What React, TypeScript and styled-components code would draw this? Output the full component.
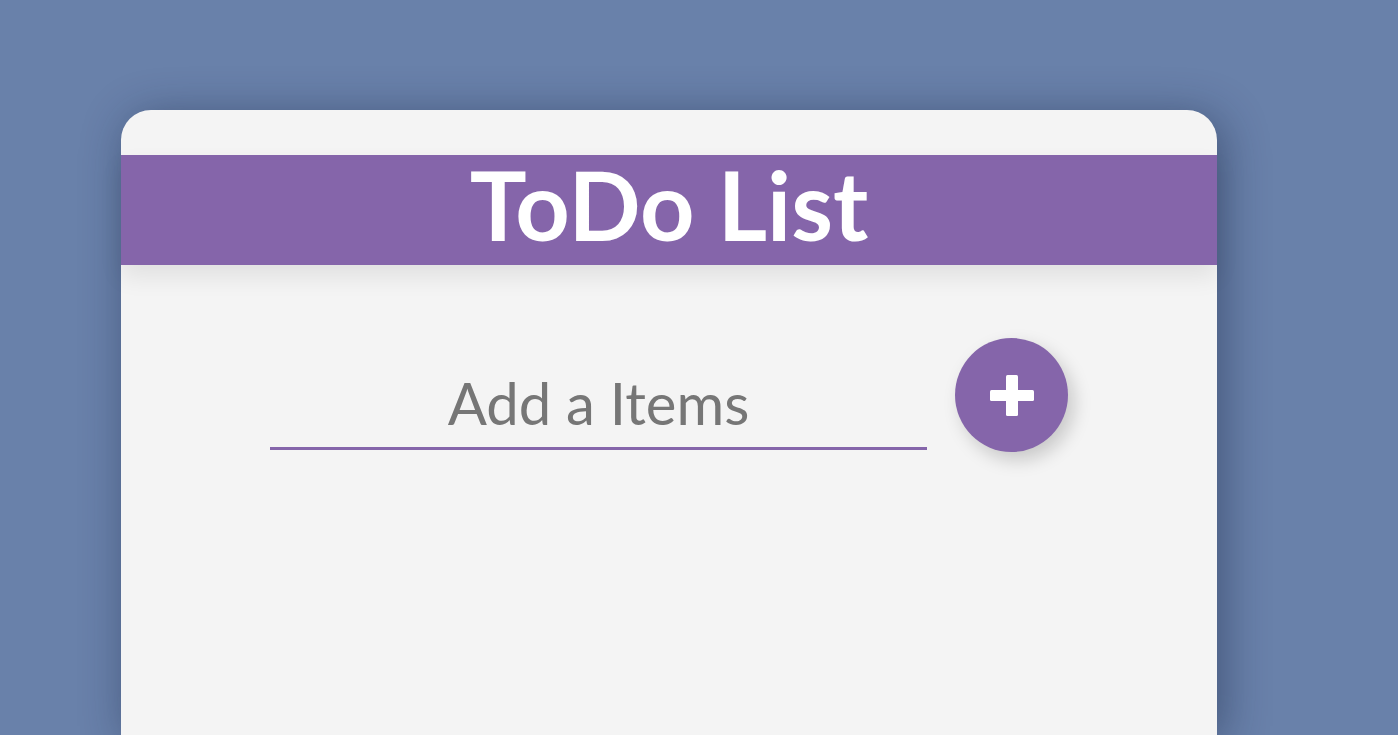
import React from "react";
import styled, { createGlobalStyle } from "styled-components";

const GlobalStyle = createGlobalStyle`
  html, body {
    margin: 0;
    padding: 0;
    height: 100%;
    overflow: hidden;
    background: #6981aa;
    font-family: Lato, "Noto Sans", sans-serif;
  }
`;

const Page = styled.div`
  height: 100vh;
  padding: 110px 0 0 121px;
  box-sizing: border-box;
  display: flex;
`;

const Card = styled.div`
  width: 1096px;
  flex: none;
  align-self: stretch;
  background: #f4f4f4;
  border-radius: 30px 30px 0 0;
  padding-top: 45px;
  box-sizing: border-box;
  box-shadow: 6px 6px 45px rgba(20, 30, 60, 0.45);
`;

const Header = styled.h1`
  margin: 0;
  height: 110px;
  padding-bottom: 12px;
  box-sizing: border-box;
  display: flex;
  align-items: center;
  justify-content: center;
  background: #8565aa;
  color: #ffffff;
  font-family: Lato, "Noto Sans", sans-serif;
  font-weight: 700;
  font-size: 95px;
  line-height: 1;
  box-shadow: 0 12px 22px rgba(0, 0, 0, 0.08);
`;

const InputRow = styled.div`
  display: flex;
  justify-content: center;
  align-items: flex-end;
  gap: 28px;
  padding-top: 73px;
`;

const ItemInput = styled.input`
  width: 657px;
  height: 79px;
  margin-bottom: 2px;
  padding: 0 0 14px;
  box-sizing: border-box;
  border: none;
  border-bottom: 3px solid #8565aa;
  background: transparent;
  outline: none;
  text-align: center;
  font-family: Lato, "Noto Sans", sans-serif;
  font-size: 58px;
  color: #555;

  &::placeholder {
    color: #767676;
  }
`;

const AddButton = styled.button`
  width: 113px;
  height: 114px;
  border: none;
  border-radius: 50%;
  background: #8565aa;
  display: flex;
  align-items: center;
  justify-content: center;
  padding: 0;
  cursor: pointer;
  box-shadow: 6px 8px 18px rgba(0, 0, 0, 0.18);
`;

const PlusIcon = () => (
  <svg width="44" height="41" viewBox="0 0 44 41">
    <rect x="0" y="15" width="44" height="11" rx="1.5" fill="#fff" />
    <rect x="16" y="0" width="12" height="41" rx="1.5" fill="#fff" />
  </svg>
);

const App: React.FC = () => {
  return (
    <>
      <GlobalStyle />
      <Page>
        <Card>
          <Header>ToDo List</Header>
          <InputRow>
            <ItemInput type="text" placeholder="Add a Items" />
            <AddButton aria-label="add item">
              <PlusIcon />
            </AddButton>
          </InputRow>
        </Card>
      </Page>
    </>
  );
};

export default App;
